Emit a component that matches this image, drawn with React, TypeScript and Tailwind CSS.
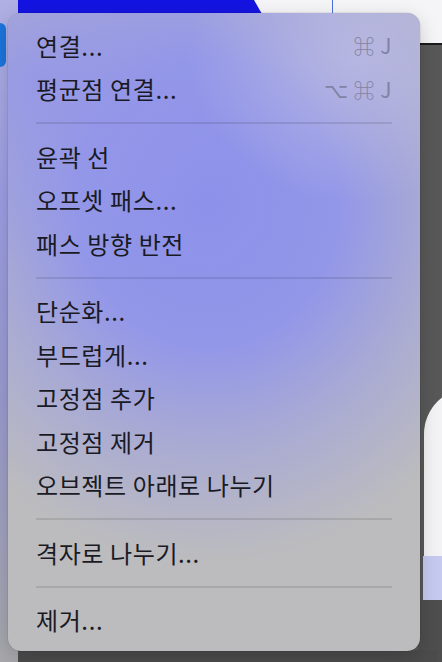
import React from "react";

type Item = { label: string; shortcut?: string } | "sep";

const items: Item[] = [
  { label: "연결...", shortcut: "⌘ J" },
  { label: "평균점 연결...", shortcut: "⌥ ⌘ J" },
  "sep",
  { label: "윤곽 선" },
  { label: "오프셋 패스..." },
  { label: "패스 방향 반전" },
  "sep",
  { label: "단순화..." },
  { label: "부드럽게..." },
  { label: "고정점 추가" },
  { label: "고정점 제거" },
  { label: "오브젝트 아래로 나누기" },
  "sep",
  { label: "격자로 나누기..." },
  "sep",
  { label: "제거..." },
];

export default function App() {
  return (
    <div
      className="relative w-[442px] h-[662px] overflow-hidden bg-[#585858]"
      style={{ fontFamily: '"Noto Sans CJK KR", "Noto Sans", sans-serif' }}
    >
      {/* canvas underneath the menu */}
      <div className="absolute left-0 top-0 w-[442px] h-[44px] bg-[#f5f5f7]" />
      <div className="absolute left-[18px] top-0 w-[244px] h-[14px] bg-[#1414e2] [clip-path:polygon(0_0,236px_0,244px_14px,0_14px)]" />
      <div className="absolute left-[332px] top-0 w-px h-[14px] bg-[#4a6fdc]" />
      <div className="absolute left-[400px] top-[43px] w-[42px] h-[2px] bg-[#1a1a1a]" />
      <div className="absolute left-0 top-0 w-[18px] h-[662px] bg-[linear-gradient(180deg,#b0b0e4_0%,#9c9ee4_30%,#9a9bd0_60%,#a8a8ac_100%)]" />
      <div className="absolute left-[-6px] top-[23px] w-[12px] h-[44px] rounded-full bg-[#1b74dc]" />
      <div className="absolute left-[424px] top-[388px] w-[60px] h-[168px] rounded-tl-[46px] bg-[#f3f3f5]" />
      <div className="absolute left-[423px] top-[556px] w-[19px] h-[44px] bg-[#c6caf1]" />
      <div className="absolute left-[418px] top-[600px] w-[24px] h-[62px] bg-[#4e4e4e]" />
      <div className="absolute left-[18px] top-[650px] w-[420px] h-[12px] bg-[#4c4c4c]" />

      {/* menu */}
      <div className="relative ml-[8px] mt-[13px] w-[412px] h-[638px] rounded-[13px] overflow-hidden shadow-[0_0_0_0.5px_rgba(0,0,0,0.12),0_6px_20px_rgba(0,0,0,0.18)] bg-[#bcbcbe]">
        <div className="absolute inset-0 bg-[radial-gradient(ellipse_330px_360px_at_200px_190px,#8d91ea_0%,#9397e8_40%,rgba(160,162,222,0.65)_68%,rgba(188,188,190,0)_100%)]" />
        <div className="absolute inset-0 bg-[radial-gradient(ellipse_220px_180px_at_30px_70px,rgba(148,150,232,0.85)_0%,rgba(148,150,232,0)_100%)]" />
        <div className="absolute inset-0 bg-[radial-gradient(ellipse_170px_150px_at_350px_40px,rgba(184,184,226,0.9)_0%,rgba(184,184,226,0)_100%)]" />
        <div className="relative flex flex-col pt-[11px] pb-[9px]">
          {items.map((it, i) =>
            it === "sep" ? (
              <div key={i} className="h-[24px] flex items-center px-[28px]">
                <div className="h-[2px] w-full bg-black/10" />
              </div>
            ) : (
              <div
                key={i}
                className="h-[43.5px] flex items-center justify-between px-[28px] text-[24px] text-[#1a1a24]"
              >
                <span className="tracking-[0.6px]">{it.label}</span>
                {it.shortcut && (
                  <span className="text-[21px] text-[#8283a4] tracking-[0.5px]">{it.shortcut}</span>
                )}
              </div>
            )
          )}
        </div>
      </div>
    </div>
  );
}
